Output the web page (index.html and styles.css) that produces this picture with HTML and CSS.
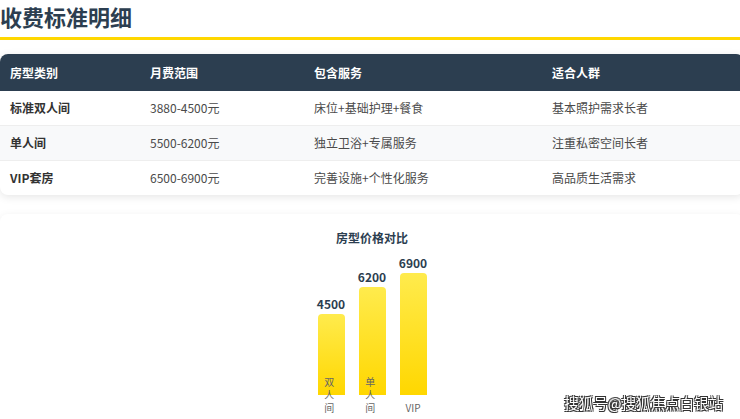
FILE: index.html
```html
<!DOCTYPE html>
<html lang="zh">
<head>
<meta charset="utf-8">
<link rel="stylesheet" href="styles.css">
</head>
<body>
<div class="page">
  <h2 class="title">收费标准明细</h2>
  <div class="table-card">
    <table class="fees">
      <colgroup>
        <col class="c1"><col class="c2"><col class="c3"><col class="c4">
      </colgroup>
      <thead>
        <tr><th>房型类别</th><th>月费范围</th><th>包含服务</th><th>适合人群</th></tr>
      </thead>
      <tbody>
        <tr><td class="name">标准双人间</td><td>3880-4500元</td><td>床位+基础护理+餐食</td><td>基本照护需求长者</td></tr>
        <tr class="alt"><td class="name">单人间</td><td>5500-6200元</td><td>独立卫浴+专属服务</td><td>注重私密空间长者</td></tr>
        <tr><td class="name">VIP套房</td><td>6500-6900元</td><td>完善设施+个性化服务</td><td>高品质生活需求</td></tr>
      </tbody>
    </table>
  </div>
  <div class="chart-card">
    <div class="chart-title">房型价格对比</div>
    <div class="bars">
      <div class="bar" style="height:81px"><span class="val">4500</span><span class="lbl">双人间</span></div>
      <div class="bar" style="height:108px"><span class="val">6200</span><span class="lbl">单人间</span></div>
      <div class="bar" style="height:122px"><span class="val">6900</span><span class="lbl">VIP</span></div>
    </div>
  </div>
</div>
<div class="watermark">搜狐号@搜狐焦点白银站</div>
</body>
</html>
```
FILE: styles.css
```css
html, body {
  margin: 0;
  padding: 0;
  overflow: hidden;
  background: #fff;
}
body {
  font-family: "Noto Sans CJK SC", "Noto Sans", sans-serif;
  color: #333;
}
.page {
  width: 744px;
}
.title {
  margin: 0;
  font-size: 22px;
  line-height: 32px;
  font-weight: 700;
  color: #2c3e50;
  padding-bottom: 5px;
  border-bottom: 3px solid #ffd700;
}
.table-card {
  margin-top: 14px;
  border-radius: 8px;
  overflow: hidden;
  box-shadow: 0 2px 8px rgba(0, 0, 0, 0.1);
  background: #fff;
}
.fees {
  width: 100%;
  border-collapse: collapse;
  table-layout: fixed;
  font-size: 12px;
  line-height: 16px;
}
.c1 { width: 140px; }
.c2 { width: 164px; }
.c3 { width: 238px; }
.fees th {
  background: #2c3e50;
  color: #fff;
  font-weight: 700;
  text-align: left;
  height: 37px;
  padding: 0 10px;
}
.fees td {
  height: 34px;
  padding: 0 10px;
  color: #4a4a4a;
  border-bottom: 1px solid #eee;
}
.fees tr:last-child td { border-bottom: none; }
.fees tr.alt td { background: #f8f9fa; }
.fees td.name {
  font-weight: 700;
  color: #333;
}
.chart-card {
  margin-top: 19px;
  border-radius: 8px;
  background: #fff;
  box-shadow: 0 2px 8px rgba(0, 0, 0, 0.08);
  padding-top: 15px;
  height: 260px;
}
.chart-title {
  text-align: center;
  font-size: 12px;
  font-weight: 700;
  color: #2c3e50;
  line-height: 18px;
}
.bars {
  display: flex;
  justify-content: center;
  align-items: flex-end;
  gap: 14px;
  height: 148px;
}
.bar {
  position: relative;
  width: 27px;
  border-radius: 4px 4px 0 0;
  background: linear-gradient(to bottom, #ffeb4d, #ffd700);
}
.val {
  position: absolute;
  left: 50%;
  bottom: 100%;
  transform: translateX(-50%);
  margin-bottom: 2px;
  font-size: 12px;
  font-weight: 700;
  color: #2c3e50;
  line-height: 16px;
}
.lbl {
  position: absolute;
  left: 50%;
  bottom: -19px;
  transform: translateX(-50%);
  font-size: 10px;
  line-height: 13px;
  color: #666;
}
.watermark {
  position: fixed;
  right: 17px;
  bottom: 7px;
  font-size: 14.5px;
  line-height: 18px;
  color: #fff;
  font-family: "Noto Sans CJK SC", sans-serif;
  text-shadow: -1px -1px 0 #333, 1px -1px 0 #333, -1px 1px 0 #333, 1px 1px 0 #333;
}
```
